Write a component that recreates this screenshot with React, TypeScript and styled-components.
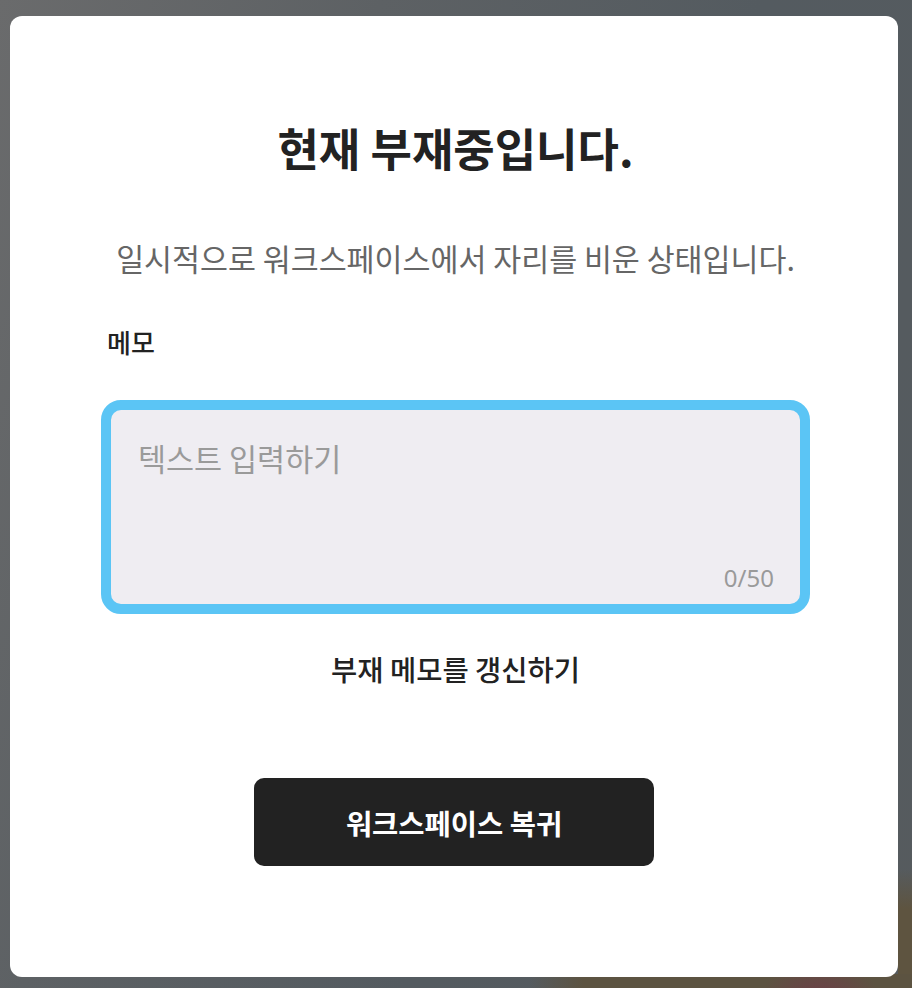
import React, { useState } from 'react';
import styled, { createGlobalStyle } from 'styled-components';

const GlobalStyle = createGlobalStyle`
  html, body {
    margin: 0;
    padding: 0;
    height: 100%;
  }
  body {
    font-family: "Noto Sans CJK KR", "Noto Sans", sans-serif;
  }
  #root {
    height: 100%;
  }
`;

const MAX_LENGTH = 50;

const Backdrop = styled.div`
  box-sizing: border-box;
  height: 100vh;
  display: flex;
  padding: 16px 14px 11px 10px;
  background:
    radial-gradient(ellipse 60px 40px at 820px 1000px, #6e3d48 0%, rgba(110, 61, 72, 0) 100%),
    linear-gradient(90deg, rgba(92, 82, 64, 0) 0%, rgba(92, 82, 64, 0) 58%, #5c5341 64%, #5c5341 100%) bottom / 100% 14px no-repeat,
    linear-gradient(180deg, rgba(94, 84, 64, 0) 0%, rgba(94, 84, 64, 0) 88%, #5e5440 92%, #5e5440 100%) right / 14px 100% no-repeat,
    linear-gradient(110deg, #6a6b6c 0%, #5d6164 30%, #545b60 60%, #565b5e 100%);
`;

const Modal = styled.div`
  flex: 1;
  display: flex;
  flex-direction: column;
  align-items: center;
  background: #ffffff;
  border-radius: 12px;
  padding: 106px 88px 0 91px;
`;

const Title = styled.h1`
  margin: 0;
  font-size: 45px;
  line-height: 52px;
  font-weight: 600;
  color: #222222;
`;

const Subtitle = styled.p`
  margin: 66px 0 0;
  font-size: 30.4px;
  line-height: 36px;
  font-weight: 400;
  color: #666666;
`;

const Label = styled.label`
  align-self: stretch;
  margin: 50px 0 0 6px;
  font-size: 26px;
  line-height: 32px;
  font-weight: 500;
  color: #222222;
`;

const Field = styled.div`
  align-self: stretch;
  box-sizing: border-box;
  height: 214px;
  margin-top: 42px;
  display: flex;
  flex-direction: column;
  background: #efedf2;
  border: 10px solid #5bc5f5;
  border-radius: 20px;
  padding: 28px 26px 12px 27px;
`;

const MemoInput = styled.textarea`
  flex: 1;
  border: none;
  outline: none;
  resize: none;
  padding: 0;
  background: transparent;
  font-family: inherit;
  font-size: 30.5px;
  line-height: 40px;
  color: #222222;

  &::placeholder {
    color: #9a9a9a;
  }
`;

const Counter = styled.span`
  align-self: flex-end;
  font-family: "Noto Sans", sans-serif;
  font-size: 24px;
  line-height: 28px;
  color: #9a9a9a;
`;

const LinkButton = styled.button`
  margin-top: 38px;
  border: none;
  background: none;
  padding: 0;
  cursor: pointer;
  font-family: inherit;
  font-size: 28.5px;
  line-height: 34px;
  font-weight: 500;
  color: #222222;
`;

const PrimaryButton = styled.button`
  margin: 92px 3px 0 0;
  width: 400px;
  height: 88px;
  border: none;
  border-radius: 10px;
  background: #222222;
  color: #ffffff;
  cursor: pointer;
  font-family: inherit;
  font-size: 28.5px;
  font-weight: 600;
`;

const App = () => {
  const [memo, setMemo] = useState('');

  return (
    <>
      <GlobalStyle />
      <Backdrop>
        <Modal>
          <Title>현재 부재중입니다.</Title>
          <Subtitle>일시적으로 워크스페이스에서 자리를 비운 상태입니다.</Subtitle>
          <Label htmlFor="memo">메모</Label>
          <Field>
            <MemoInput
              id="memo"
              maxLength={MAX_LENGTH}
              placeholder="텍스트 입력하기"
              value={memo}
              onChange={(e) => setMemo(e.target.value)}
            />
            <Counter>{memo.length}/{MAX_LENGTH}</Counter>
          </Field>
          <LinkButton type="button">부재 메모를 갱신하기</LinkButton>
          <PrimaryButton type="button">워크스페이스 복귀</PrimaryButton>
        </Modal>
      </Backdrop>
    </>
  );
};

export default App;
